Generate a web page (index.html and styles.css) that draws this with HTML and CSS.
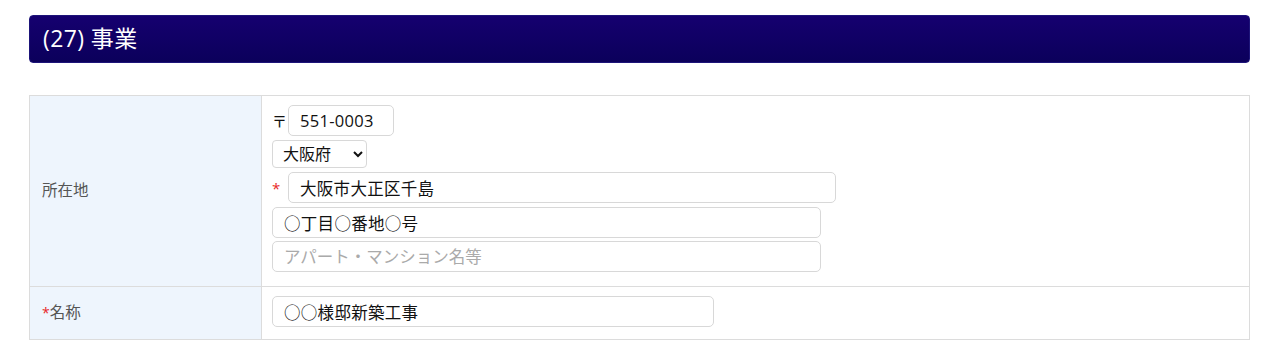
FILE: index.html
```html
<!DOCTYPE html>
<html lang="ja">
<head>
<meta charset="utf-8">
<title>事業</title>
<link rel="stylesheet" href="styles.css">
</head>
<body>
<div class="page">
  <h2 class="section-title">(27) 事業</h2>
  <table class="form-table">
    <tr class="row-address">
      <th class="label">所在地</th>
      <td class="field">
        <div class="line"><span class="zip-mark">〒</span><input class="input zip" type="text" value="551-0003"></div>
        <div class="line"><select class="select pref"><option>大阪府</option></select></div>
        <div class="line"><span class="req req-field">*</span><input class="input city" type="text" value="大阪市大正区千島"></div>
        <div class="line"><input class="input addr" type="text" value="○丁目○番地○号"></div>
        <div class="line last"><input class="input addr" type="text" placeholder="アパート・マンション名等"></div>
      </td>
    </tr>
    <tr class="row-name">
      <th class="label"><span class="req">*</span>名称</th>
      <td class="field">
        <div class="line last"><input class="input name" type="text" value="○○様邸新築工事"></div>
      </td>
    </tr>
  </table>
</div>
</body>
</html>
```

FILE: styles.css
```css
* { box-sizing: border-box; }
html, body { margin: 0; padding: 0; background: #fff; }
body {
  font-family: "Open Sans", "Noto Sans CJK JP", sans-serif;
  color: #333;
}
.page {
  padding: 15px 30px 0 29px;
}
.section-title {
  margin: 0;
  height: 48px;
  padding: 0 13px 4px;
  display: flex;
  align-items: center;
  border-radius: 4px;
  background: linear-gradient(#15006f, #0b005b);
  border: 1px solid #1d1479;
  color: #fff;
  font-size: 23px;
  font-weight: normal;
  letter-spacing: 0.4px;
}
.form-table {
  margin-top: 32px;
  width: 100%;
  border-collapse: collapse;
  border: 1px solid #dcdcdc;
}
.form-table th, .form-table td {
  border: 1px solid #dcdcdc;
}
.label {
  width: 232px;
  background: #eef5fd;
  text-align: left;
  font-weight: normal;
  font-size: 15.5px;
  color: #555;
  padding: 0 12px 4px;
  vertical-align: middle;
}
.field {
  padding: 9px 10px 10px 10px;
  vertical-align: top;
}
.line {
  display: flex;
  align-items: center;
  margin-bottom: 4px;
}
.row-name .line.last { margin-bottom: 2px; }
.zip-mark {
  font-size: 15px;
  color: #111;
  width: 16px;
}
.req {
  color: #e82828;
  font-size: 14px;
}
.req-field {
  width: 16px;
  font-size: 15px;
}
.input {
  height: 31px;
  border: 1px solid #d8d8d8;
  border-radius: 5px;
  padding: 0 11px;
  font-family: "Open Sans", "Noto Sans CJK JP", sans-serif;
  font-size: 16.5px;
  letter-spacing: 0.3px;
  color: #111;
  background: #fff;
  outline: none;
}
.input::placeholder { color: #aaa; letter-spacing: 0; }
.zip { width: 106px; }
.city { width: 548px; }
.addr { width: 549px; }
.name { width: 442px; }
.select {
  width: 95px;
  height: 28px;
  border: 1px solid #d8d8d8;
  border-radius: 4px;
  padding: 0 4px 0 6px;
  font-family: "Open Sans", "Noto Sans CJK JP", sans-serif;
  font-size: 16px;
  color: #111;
  background: #fff;
}
.row-address .line:nth-child(4) { margin-bottom: 3px; }
```
